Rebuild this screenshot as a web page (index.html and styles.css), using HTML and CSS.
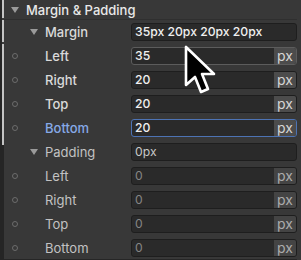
FILE: index.html
```html
<!DOCTYPE html>
<html lang="en">

<head>
    <meta charset="UTF-8">
    <meta name="viewport" content="width=device-width, initial-scale=1.0">
    <title>Margin &amp; Padding</title>
    <link rel="stylesheet" href="styles.css">
</head>

<body>

    <div class="screen">
        <div class="rail">
            <div class="thumb"></div>
        </div>

        <div class="panel">
            <div class="section-head">
                <span class="caret"></span>Margin &amp; Padding
            </div>

            <!-- margin -->
            <div class="row">
                <div class="label group"><span class="caret"></span>Margin</div>
                <div class="field"><span class="value">35px 20px 20px 20px</span></div>
            </div>
            <div class="row">
                <div class="label"><span class="dot"></span>Left</div>
                <div class="field hover"><span class="value">35</span><span class="unit">px</span></div>
            </div>
            <div class="row">
                <div class="label"><span class="dot"></span>Right</div>
                <div class="field"><span class="value">20</span><span class="unit">px</span></div>
            </div>
            <div class="row">
                <div class="label"><span class="dot"></span>Top</div>
                <div class="field"><span class="value">20</span><span class="unit">px</span></div>
            </div>
            <div class="row">
                <div class="label active"><span class="dot"></span>Bottom</div>
                <div class="field focus"><span class="value">20</span><span class="unit">px</span></div>
            </div>

            <!-- padding -->
            <div class="row muted">
                <div class="label group"><span class="caret"></span>Padding</div>
                <div class="field"><span class="value">0px</span></div>
            </div>
            <div class="row muted">
                <div class="label"><span class="dot"></span>Left</div>
                <div class="field"><span class="value empty">0</span><span class="unit">px</span></div>
            </div>
            <div class="row muted">
                <div class="label"><span class="dot"></span>Right</div>
                <div class="field"><span class="value empty">0</span><span class="unit">px</span></div>
            </div>
            <div class="row muted">
                <div class="label"><span class="dot"></span>Top</div>
                <div class="field"><span class="value empty">0</span><span class="unit">px</span></div>
            </div>
            <div class="row muted last">
                <div class="label"><span class="dot"></span>Bottom</div>
                <div class="field"><span class="value empty">0</span><span class="unit">px</span></div>
            </div>
        </div>

        <svg class="cursor" width="36" height="54" viewBox="0 0 36 54">
            <path d="M3 3 L3 41 L12 33 L18 48 L25 45 L19 30 L31 30 Z" fill="#000" stroke="#fff" stroke-width="2.6" stroke-linejoin="round" />
        </svg>
    </div>

</body>

</html>
```

FILE: styles.css
```css
* {
    padding: 0;
    margin: 0;
    box-sizing: border-box;
}

body {
    width: 301px;
    height: 260px;
    overflow: hidden;
    background-color: #383838;
    font-family: Inter, "Noto Sans", sans-serif;
    font-size: 13px;
    color: #e2e2e2;
}

.screen {
    position: relative;
    display: flex;
    height: 260px;
}

.rail {
    width: 4px;
    flex-shrink: 0;
    background-color: #252525;
}

.thumb {
    width: 2px;
    height: 145px;
    margin-left: 2px;
    background: linear-gradient(#c4c4c4 0 18px, #3a3a3a 18px 20px, #c4c4c4 20px 42px, #3a3a3a 42px 44px, #c4c4c4 44px);
}

.panel {
    flex: 1;
    padding-right: 4px;
}

.section-head {
    display: flex;
    align-items: center;
    height: 20px;
    padding-left: 7px;
    font-weight: 500;
    color: #e8e8e8;
    border-bottom: 1px solid #2f2f2f;
}

.caret {
    width: 0;
    height: 0;
    border-left: 4px solid transparent;
    border-right: 4px solid transparent;
    border-top: 6px solid #9a9a9a;
    margin-right: 7px;
}

.row {
    display: grid;
    grid-template-columns: 127px 1fr;
    align-items: center;
    height: 24px;
}

.row.last {
    border-bottom: 1px solid #262626;
}

.label {
    display: flex;
    align-items: center;
    padding-left: 8px;
    font-weight: 500;
    color: #dadada;
}

.label.group {
    padding-left: 26px;
}

.label.active {
    color: #86a9e6;
}

.dot {
    width: 6px;
    height: 6px;
    border: 1px solid #6c6c6c;
    border-radius: 50%;
    margin-right: 27px;
}

.field {
    display: flex;
    align-items: stretch;
    height: 18px;
    background-color: #2a2a2a;
    border: 1px solid #1e1e1e;
    border-radius: 3px;
    overflow: hidden;
}

.field.hover {
    border-color: #5c5c5c;
}

.field.focus {
    border-color: #4d73b4;
}

.value {
    flex: 1;
    padding-left: 3px;
    line-height: 16px;
    font-size: 12.2px;
    font-weight: 500;
    color: #f0f0f0;
}

.unit {
    width: 22px;
    text-align: center;
    line-height: 15px;
    font-size: 14px;
    background-color: #4c4c4c;
    color: #d6d6d6;
}

.muted .label {
    font-weight: 400;
    color: #c2c2c2;
}

.muted .value {
    font-weight: 400;
    color: #c8c8c8;
}

.muted .value.empty {
    color: #858585;
}

.muted .unit {
    background-color: #444444;
    color: #acacac;
}

.cursor {
    position: absolute;
    left: 183px;
    top: 44px;
}
```
